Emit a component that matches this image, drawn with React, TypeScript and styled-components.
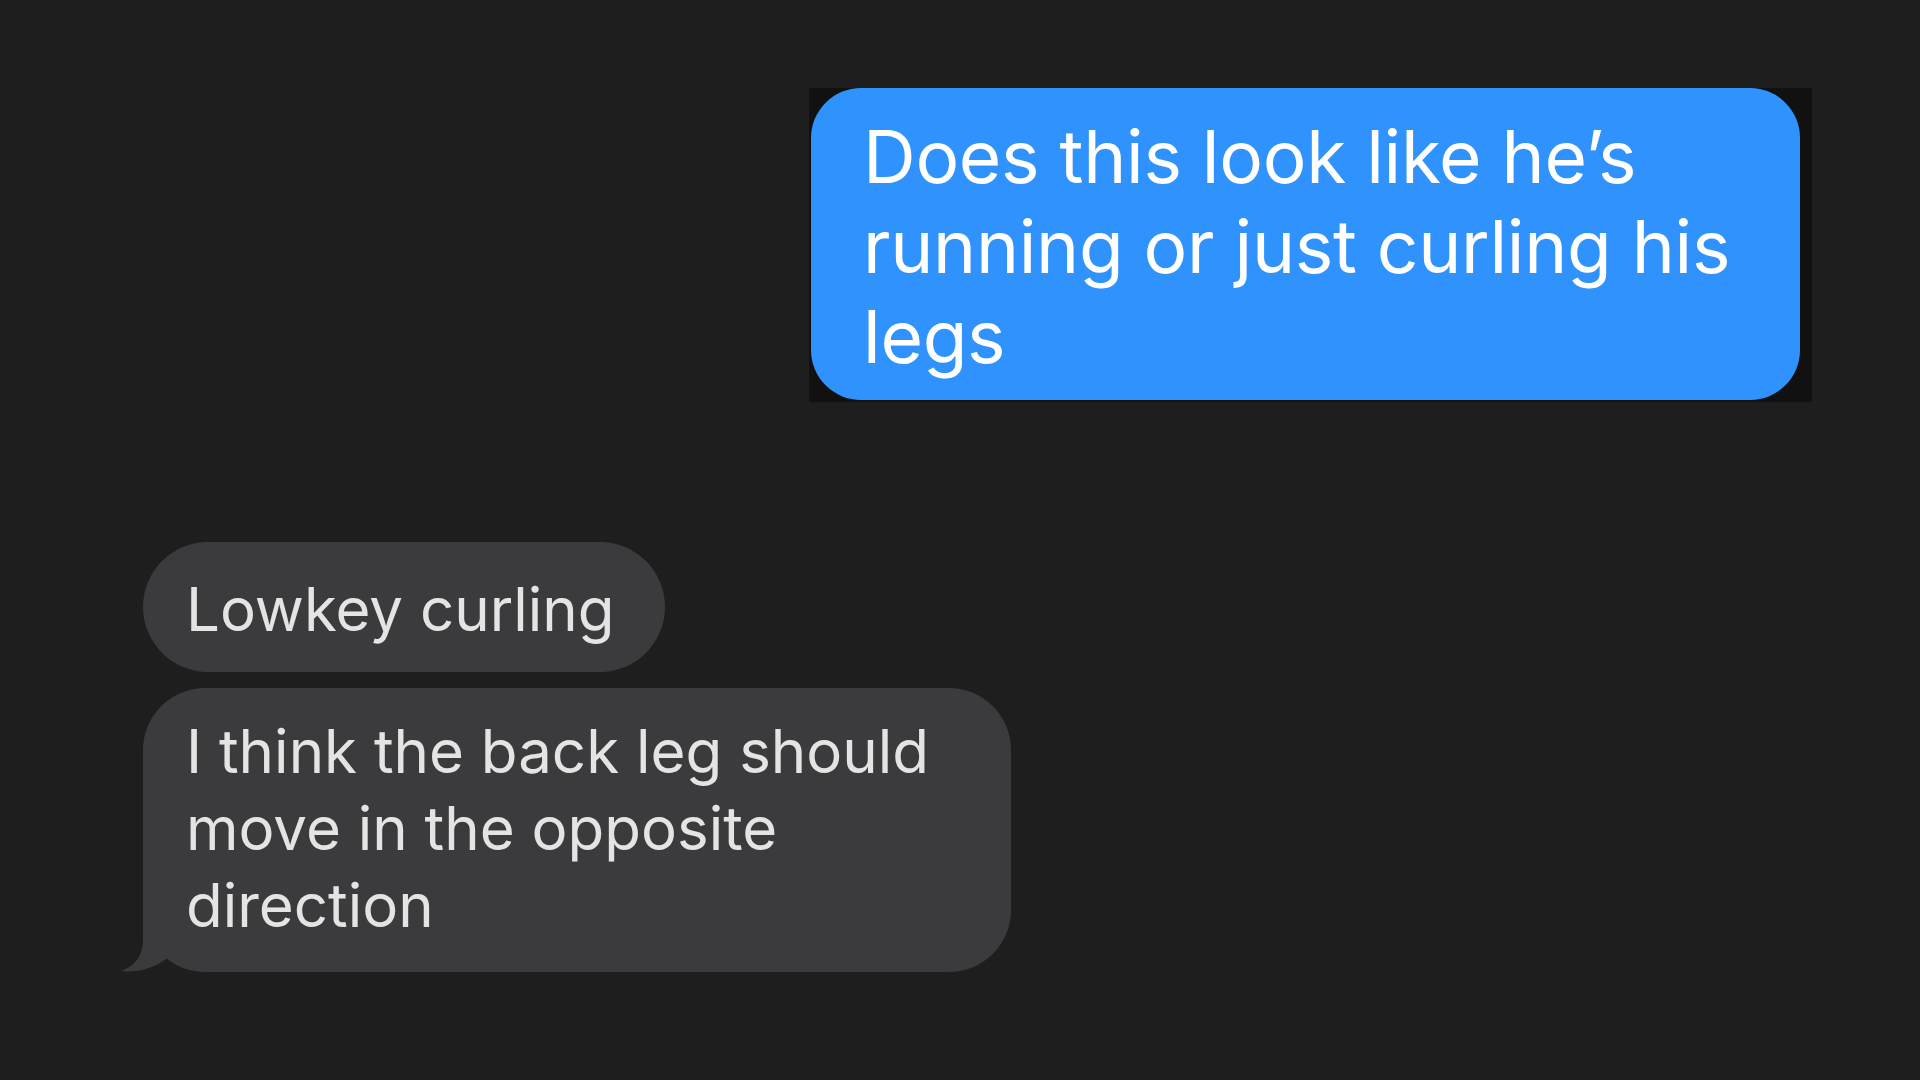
import React from "react";
import styled, { createGlobalStyle } from "styled-components";

const GlobalStyle = createGlobalStyle`
    html, body {
        margin: 0;
        padding: 0;
        background: #1e1e1e;
    }
    body {
        font-family: Inter, "Liberation Sans", sans-serif;
        -webkit-font-smoothing: antialiased;
    }
`;

const Thread = styled.div`
    min-height: 1080px;
    box-sizing: border-box;
    padding: 88px 108px 0 143px;
    display: flex;
    flex-direction: column;
`;

const OutgoingRow = styled.div`
    display: flex;
    justify-content: flex-end;
`;

// the pasted screenshot had a black backdrop behind the blue bubble
const Backdrop = styled.div`
    background: #111111;
    padding: 0 12px 2px 2px;
`;

const BlueBubble = styled.div`
    box-sizing: border-box;
    width: 989px;
    background: #2f92fd;
    color: #ffffff;
    border-radius: 50px;
    padding: 24px 40px 18px 52px;
    font-size: 73px;
    line-height: 90px;
    letter-spacing: -0.3px;
    white-space: pre-line;
`;

const IncomingGroup = styled.div`
    margin-top: 140px;
    display: flex;
    flex-direction: column;
    align-items: flex-start;
    gap: 16px;
`;

const GreyBubble = styled.div<{ $width: number; $radius: number; $top: number }>`
    position: relative;
    box-sizing: border-box;
    width: ${(p) => p.$width}px;
    background: #3b3b3d;
    color: #e4e4e4;
    border-radius: ${(p) => p.$radius}px;
    padding: ${(p) => p.$top}px 20px ${(p) => 53 - p.$top}px 43px;
    font-size: 60px;
    line-height: 77px;
    letter-spacing: 0;
    white-space: pre;
`;

const Tail = styled.svg`
    position: absolute;
    left: -22px;
    bottom: 0;
    width: 60px;
    height: 70px;
`;

const incoming = [
    { text: "Lowkey curling", width: 522, radius: 65, top: 29, tail: false },
    {
        text: "I think the back leg should\nmove in the opposite\ndirection",
        width: 868,
        radius: 62,
        top: 25,
        tail: true,
    },
];

export default function App() {
    return (
        <>
            <GlobalStyle />
            <Thread>
                <OutgoingRow>
                    <Backdrop>
                        <BlueBubble>
                            {"Does this look like he\u2019s\nrunning or just curling his\nlegs"}
                        </BlueBubble>
                    </Backdrop>
                </OutgoingRow>

                <IncomingGroup>
                    {incoming.map((msg, i) => (
                        <GreyBubble
                            key={`msg-${i}`}
                            $width={msg.width}
                            $radius={msg.radius}
                            $top={msg.top}
                        >
                            {msg.text}
                            {msg.tail && (
                                <Tail viewBox="0 0 60 70">
                                    <path
                                        d="M22 0 L22 38 C22 55 12 65 0 69 C14 71 32 67 45 57 L45 0 Z"
                                        fill="#3b3b3d"
                                    />
                                </Tail>
                            )}
                        </GreyBubble>
                    ))}
                </IncomingGroup>
            </Thread>
        </>
    );
}
